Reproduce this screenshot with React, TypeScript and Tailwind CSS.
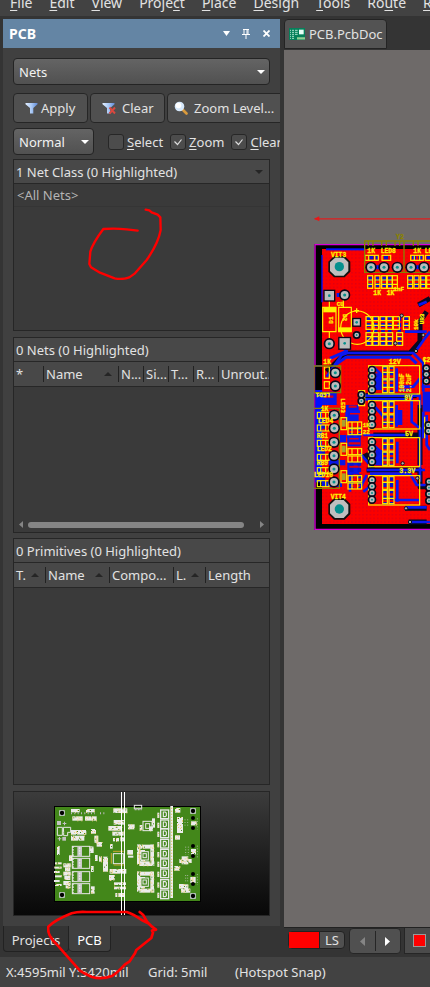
import React from "react";

type Box = [number, number, number, number];

const menus: [string, string, string][] = [
  ["", "F", "ile"],
  ["", "E", "dit"],
  ["", "V", "iew"],
  ["Proje", "c", "t"],
  ["", "P", "lace"],
  ["", "D", "esign"],
  ["", "T", "ools"],
  ["Ro", "u", "te"],
  ["", "R", "eports"],
];

function Caret({ className = "" }: { className?: string }) {
  return (
    <svg viewBox="0 0 8 4" className={`h-1 w-2 shrink-0 ${className}`} fill="currentColor" aria-hidden="true">
      <path d="M0 0H8L4 4Z" />
    </svg>
  );
}

function SortMark() {
  return (
    <svg viewBox="0 0 8 4" className="mr-1.5 h-1 w-2 shrink-0" fill="#252525" aria-hidden="true">
      <path d="M0 4H8L4 0Z" />
    </svg>
  );
}

function FunnelIcon({ clear = false }: { clear?: boolean }) {
  return (
    <svg viewBox="0 0 14 13" className="h-[13px] w-3.5 shrink-0" aria-hidden="true">
      <defs>
        <linearGradient id={clear ? "funnelB" : "funnelA"} x1="0" x2="1" y1="0" y2="0">
          <stop offset="0" stopColor="#e3efff" />
          <stop offset="0.5" stopColor="#a9c8f5" />
          <stop offset="1" stopColor="#5f8ad6" />
        </linearGradient>
      </defs>
      <path d="M0.500 1H12.500V2.200L8.300 6V11.500H5V6L0.500 2.200Z" fill={clear ? "url(#funnelB)" : "url(#funnelA)"} />
      {clear && <path d="M7.500 5.500L13 11.500M13 5.500L7.500 11.500" stroke="#d9483f" strokeWidth="1.900" />}
    </svg>
  );
}

function LensIcon() {
  return (
    <svg viewBox="0 0 14 14" className="h-3.5 w-3.5 shrink-0" aria-hidden="true">
      <path d="M8.500 8.500L12.500 12.500" stroke="#d99a3c" strokeWidth="2.600" strokeLinecap="round" />
      <circle cx="5.500" cy="5.500" r="4.800" fill="#d5e8fb" />
      <circle cx="4.500" cy="4.500" r="2.800" fill="#fff" />
    </svg>
  );
}

function DocIcon() {
  return (
    <svg viewBox="0 0 48 36" className="h-3 w-4 shrink-0" aria-hidden="true">
      <rect width="48" height="36" fill="#05805a" />
      <path d="M3 7H6M3 13H6M3 19H6M3 25H6M3 31H6M9 7H15M9 13H15M9 19H15M9 25H15M9 31H15M18 7H26M18 13H26M18 19H26" stroke="#c9f3e2" strokeWidth="2.500" />
      <rect x="30" y="5" width="14" height="14" fill="#e6fff6" />
      <path d="M25 31H48" stroke="#d8f5b0" strokeWidth="7" strokeDasharray="4 2" />
    </svg>
  );
}

function PanelHeader() {
  const btn = "flex h-5 w-5 items-center justify-center";
  return (
    <header className="flex h-[29px] shrink-0 items-center bg-[#6485a4] pl-1.5 pr-1 text-white">
      <h1 className="flex-1 text-[14px] font-bold leading-5">PCB</h1>
      <button className={btn} aria-label="Panel menu">
        <svg viewBox="0 0 7 5" className="h-[5px] w-[7px]" fill="white"><path d="M0 0H7L3.500 5Z" /></svg>
      </button>
      <button className={btn} aria-label="Pin panel">
        <svg viewBox="0 0 8 10" className="h-2.5 w-2" fill="none" stroke="white">
          <path d="M1 .5H7M2 0V5M5 0V5M6 0V5M0 5.500H8M4 6V10" />
        </svg>
      </button>
      <button className={btn} aria-label="Close panel">
        <svg viewBox="0 0 7 7" className="h-[7px] w-[7px]" stroke="white" strokeWidth="1.800"><path d="M.5 .5L6.500 6.500M6.500 .5L.5 6.500" /></svg>
      </button>
    </header>
  );
}

function Dropdown({ label, value, className }: { label: string; value: string; className: string }) {
  return (
    <div className={`relative flex h-[27px] items-center rounded-sm border border-[#242424] bg-linear-to-b from-[#646464] to-[#515151] ${className}`}>
      <select aria-label={label} className="h-full w-full appearance-none bg-transparent pl-[5px] text-[13px] text-[#f2f2f2] outline-none">
        <option>{value}</option>
      </select>
      <Caret className="pointer-events-none absolute right-1 text-white" />
    </div>
  );
}

function Check({ first, rest, on = false }: { first: string; rest: string; on?: boolean }) {
  return (
    <label className="flex shrink-0 items-center gap-[3px]">
      <span className="relative flex h-4 w-4 items-center justify-center">
        <input type="checkbox" defaultChecked={on} className="peer h-4 w-4 appearance-none rounded-[3px] border border-[#272727] bg-[#4c4c4c]" />
        <svg viewBox="0 0 8 8" className="pointer-events-none invisible absolute h-2 w-2 peer-checked:visible" fill="none" stroke="#ddd" strokeWidth="1.200">
          <path d="M0.500 3.500L3.500 6.500L7.500 1.500" />
        </svg>
      </span>
      <span><span className="underline underline-offset-2">{first}</span>{rest}</span>
    </label>
  );
}

function Tool({ icon, children, className }: { icon: React.ReactNode; children: React.ReactNode; className: string }) {
  return (
    <button className={`flex h-[30px] shrink-0 items-center rounded-sm border border-[#262626] bg-[#505050] ${className}`}>
      {icon}
      {children}
    </button>
  );
}

function Columns({ cols }: { cols: { text: string; width: string; sort?: boolean }[] }) {
  return (
    <table className="w-full table-fixed border-collapse">
      <thead>
        <tr className="h-6 border-b border-[#272727] bg-[#484848]">
          {cols.map((c, i) => (
            <th key={i} scope="col" className={`overflow-hidden p-0 text-left font-normal ${c.width}`}>
              <span className={`flex h-4 items-center justify-between whitespace-nowrap ${i ? "border-l border-[#222] pl-0.5" : "pl-0.5"}`}>
                {c.text}
                {c.sort && <SortMark />}
              </span>
            </th>
          ))}
        </tr>
      </thead>
    </table>
  );
}

const listBox = "border border-[#262626] bg-[#3a3a3a]";
const listTitle = "flex h-6 items-center justify-between border-b border-[#272727] bg-[#484848] px-0.5";

/* ---------- board overview ---------- */

const yBlocks: number[] = [45, 75, 102, 133, 163, 192, 222, 254, 285];
const overviewWhite: Box[] = [
  [78, 42, 26, 10], [123, 42, 26, 10], [82, 64, 31, 13], [120, 64, 35, 13], [205, 40, 42, 14], [206, 75, 32, 14],
  [78, 105, 46, 14], [78, 122, 40, 15], [138, 102, 15, 14], [148, 122, 12, 22], [155, 141, 16, 14], [190, 93, 40, 14],
  [202, 110, 34, 12], [204, 129, 18, 10], [226, 127, 12, 12], [249, 88, 20, 15], [247, 165, 17, 14], [249, 182, 16, 6],
  [36, 153, 8, 27], [134, 154, 12, 20], [72, 181, 10, 17], [138, 213, 8, 18], [138, 274, 11, 22],
  [150, 180, 8, 18], [162, 184, 8, 16], [174, 185, 15, 45], [194, 222, 50, 14], [192, 240, 17, 16], [207, 262, 36, 8],
  [207, 275, 36, 8], [211, 294, 26, 12], [195, 147, 8, 14], [284, 90, 8, 16], [321, 70, 9, 28], [312, 94, 12, 14],
  [390, 39, 16, 14], [396, 66, 18, 48], [390, 121, 15, 13], [438, 79, 17, 12], [438, 162, 15, 16], [410, 184, 20, 24], [403, 192, 37, 12],
  [388, 213, 16, 14], [436, 246, 16, 18], [402, 267, 16, 14], [408, 281, 28, 12], [415, 268, 15, 24],
  [30, 202, 20, 6], [28, 215, 22, 6], [27, 228, 17, 6], [30, 241, 20, 6], [27, 255, 17, 6], [30, 267, 20, 6],
  [55, 205, 22, 12], [60, 217, 16, 12], [55, 230, 22, 12], [58, 243, 18, 12], [55, 258, 22, 12], [62, 270, 14, 10],
  [276, 149, 50, 12], [276, 149, 10, 58], [283, 199, 45, 14], [316, 149, 11, 60], [284, 165, 16, 34],
  [276, 230, 50, 12], [276, 230, 10, 60], [283, 281, 45, 12], [316, 230, 11, 60], [284, 246, 16, 34],
];

function grain(list: Box[]): { x: number; y: number; c: string }[] {
  const out: { x: number; y: number; c: string }[] = [];
  list.forEach(([x, y, w, h], n) => {
    for (let i = 0; i < w; i += 3)
      for (let j = 0; j < h; j += 3) {
        const k = (i * 7 + j * 11 + n * 5 + i * j) % 17;
        if (k === 2 || k === 9) out.push({ x: x + i, y: y + j, c: "#f0cf80" });
        if (k === 5) out.push({ x: x + i, y: y + j, c: "#48871c" });
      }
  });
  return out;
}
const overviewGrain = grain(overviewWhite);

function Overview() {
  return (
    <svg viewBox="-93 -9 765 369" className="block h-[123px] w-full" role="img" aria-label="Board overview">
      <rect x="28.500" y="34.500" width="438" height="285" fill="#43871a" stroke="#000" strokeWidth="3" />
      <g fill="#ececec">{overviewWhite.map(([x, y, w, h], i) => <rect key={i} x={x} y={y} width={w} height={h} />)}</g>
      <g>{overviewGrain.map((g, i) => <rect key={i} x={g.x} y={g.y} width="3" height="3" fill={g.c} />)}</g>
      <g fill="none" stroke="#e9e9e9" strokeWidth="3">
        <path d="M37 97H52V121H37ZM55 97H77V112H68V122H56V112Z" />
        {[154, 190, 230, 266].map((y) => (
          <g key={y}>
            <rect x="82" y={y} width="52" height="30" fill="#43871a" />
            <rect x="97" y={y} width="14" height="30" fill="#c9c9c9" stroke="none" />
            <path d={`M84 ${y}V${y + 30}M104 ${y + 3}V${y + 27}`} strokeWidth="4" strokeDasharray="5 3" />
          </g>
        ))}
        <rect x="294" y="79" width="27" height="28" />
        <rect x="302" y="86" width="12" height="14" />
        <rect x="288" y="170" width="22" height="25" fill="#43871a" />
        <rect x="294" y="176" width="10" height="12" />
        <rect x="288" y="249" width="22" height="25" fill="#43871a" />
        <rect x="294" y="255" width="10" height="12" />
        {yBlocks.map((y) => (
          <g key={y}>
            <rect x="347" y={y} width="24" height="26" strokeWidth="4" fill="#43871a" />
            <path d={`M355 ${y + 6}H361L364 ${y + 9}V${y + 17}L361 ${y + 20}H355Z`} strokeWidth="3.500" />
            <path d={`M340 ${y + 8}V${y + 24}`} strokeWidth="6" />
            <path d={`M340 ${y + 12}V${y + 22}`} strokeWidth="4" stroke="#e2c684" strokeDasharray="3 5" />
          </g>
        ))}
        <rect x="205" y="176" width="30" height="30" />
        <rect x="268" y="31" width="22" height="10" />
        <path d="M269 42H290" stroke="#bbb" strokeWidth="8" strokeDasharray="6 3" />
      </g>
      <path d="M204 169H236M199 174V206M206 210H236" stroke="#cba32d" strokeWidth="3" />
      <path d="M380 33V309" stroke="#f0f0f0" strokeWidth="8" />
      <path d="M380 38V306" stroke="#e2bd68" strokeWidth="3" strokeDasharray="4 5" />
      <path d="M78 55H150M165 55H182" stroke="#b9b9b9" strokeWidth="6" strokeDasharray="3 7" />
      <path d="M420 73V97M428 73V97M422 155V180M430 155V180M422 240V263M428 240V263M457 70V103M457 152V187M457 237V270" stroke="#a5b79a" strokeWidth="3" strokeDasharray="3 5" />
      <g fill="#c3c3c3"><rect x="36" y="78" width="12" height="12" /><rect x="52" y="126" width="11" height="11" /><path d="M57 80H60V84H64V87H60V91H57V87H53V84H57Z" /><path d="M42 126H45V130H49V133H45V137H42V133H38V130H42Z" /></g>
      {[[51, 54], [444, 48], [51, 300], [444, 303]].map(([x, y]) => (
        <g key={`${x}-${y}`}><rect x={x - 9} y={y - 9} width="18" height="18" rx="3" fill="#b8c4bb" /><circle cx={x} cy={y} r="6.500" fill="#000" /></g>
      ))}
      {[69, 99, 153, 183, 237, 267].map((y) => <circle key={y} cx="444" cy={y} r="6" fill="#000" />)}
      <path d="M229.500 -9V360M238.500 -9V360" stroke="#fff" strokeWidth="3" />
    </svg>
  );
}

/* ---------- board layout ---------- */

const resistorsTop: number[] = [173, 195, 215, 232, 247, 293, 312, 332, 350];
const caps: [number, number][] = [
  [168, 335], [188, 335], [210, 335], [230, 335], [250, 335], [280, 335],
  [168, 383], [188, 383], [210, 383], [230, 383], [260, 383],
];
const headers: { y: number; h: number }[] = [
  { y: 482, h: 85 }, { y: 587, h: 85 }, { y: 698, h: 87 }, { y: 812, h: 88 },
];
const silk: [number, number, string, number][] = [
  [63, 155, "VIT3", 19], [172, 144, "1K", 19], [212, 145, "LED8", 19], [310, 144, "1K", 19], [344, 145, "LED", 19],
  [190, 270, "1K", 19], [230, 270, "1K", 19], [250, 257, "1nF", 18], [80, 304, "CU", 18],
  [40, 476, "1K", 19], [236, 478, "12V", 20], [338, 470, "C2", 19], [32, 618, "1K", 19], [283, 585, "9V", 19],
  [24, 654, "LED4", 19], [158, 666, "1K", 18], [158, 686, "22", 18], [20, 700, "RB1", 19], [20, 738, "LED2", 19], [285, 692, "5V", 20],
  [20, 781, "RB9", 19], [12, 817, "LED10", 19], [268, 805, "3.3V", 20], [62, 881, "VIT4", 19],
];

function Pad({ x, y, r = 12 }: { x: number; y: number; r?: number }) {
  return (
    <g>
      <circle cx={x} cy={y} r={r + 5} fill="#08081a" />
      <circle cx={x} cy={y} r={r} fill="#bcbcbc" />
      <circle cx={x} cy={y} r={r * 0.38} fill="#078f8c" />
    </g>
  );
}

function Mount({ y }: { y: number }) {
  return (
    <g>
      <path d={`M72 ${y - 32}H104L121 ${y - 15}V${y + 15}L104 ${y + 32}H72L55 ${y + 15}V${y - 15}Z`} fill="#111" />
      <path d={`M75 ${y - 27}H101L115 ${y - 13}V${y + 13}L101 ${y + 27}H75L60 ${y + 13}V${y - 13}Z`} fill="#bfbfbf" />
      <circle cx="88" cy={y} r="14" fill="#05908e" />
    </g>
  );
}

function Board() {
  return (
    <svg viewBox="12 30 348 945" className="block h-[315px] w-[116px]" role="img" aria-label="PCB layout">
      <defs>
        <pattern id="vias" width="11" height="11" patternUnits="userSpaceOnUse">
          <rect width="11" height="11" fill="#fb0000" />
          <rect x="4" y="4" width="2.500" height="2.500" fill="#a20038" />
        </pattern>
      </defs>
      <path d="M14 41.500H360" stroke="#e01f1f" strokeWidth="4" />
      <path d="M12 41.500L28 34V49Z" fill="#e81818" />
      <rect x="13" y="117" width="360" height="858" fill="#000" />
      <rect x="36" y="132" width="336" height="825" fill="url(#vias)" />
      <path d="M15 975V119H360M15 973H360" fill="none" stroke="#d800d8" strokeWidth="4" />

      <rect x="48" y="130" width="118" height="6" fill="#0010ff" />
      <path d="M36 150V292" stroke="#0010ff" strokeWidth="4" />
      <rect x="16" y="480" width="20" height="352" fill="#0010ff" />
      <rect x="16" y="485" width="20" height="70" fill="#000" />
      <g fill="#0a16e6">
        <rect x="36" y="560" width="44" height="40" />
        <rect x="58" y="618" width="32" height="26" />
        <rect x="86" y="690" width="22" height="22" />
        <rect x="56" y="765" width="50" height="16" />
        <rect x="36" y="830" width="60" height="16" />
        <rect x="108" y="600" width="38" height="48" />
        <rect x="112" y="690" width="40" height="34" />
        <rect x="112" y="772" width="36" height="36" />
        <rect x="190" y="572" width="30" height="16" />
        <rect x="195" y="505" width="20" height="50" />
        <rect x="255" y="615" width="22" height="45" />
        <rect x="196" y="735" width="20" height="46" />
        <rect x="338" y="560" width="22" height="60" />
      </g>
      <path d="M116 605H140M120 625H150M118 700H146M116 715H150M118 785H146M42 575H70" stroke="#e00010" strokeWidth="7" />

      <g fill="none" stroke="#090920" strokeWidth="15" strokeLinejoin="round">
        <path d="M50 500L108 444H300L330 410V350L350 320" />
        <path d="M165 572H320M170 795H330V845H360M165 745L190 795" />
        <path d="M285 910H350M296 951H350M330 600V780" />
        <path d="M325 300L360 280M190 690H330" />
      </g>
      <g fill="none" stroke="#0b18f0" strokeWidth="8" strokeLinejoin="round">
        <path d="M50 515L95 450L112 444H310L340 475V560" />
        <path d="M75 480L108 457H300L320 475M86 415L110 438L60 460" strokeWidth="9" />
        <path d="M165 572H330V610M160 583H290M170 795H345M180 806H300L320 840H360M150 745L185 785" />
        <path d="M318 437L345 400L360 380M285 380H350M305 570V650L330 670V830" />
        <path d="M285 907H350M300 951H360M335 545H360M120 620H150M110 695H150M120 800V860M160 860L185 840" />
        <path d="M326 300L350 290M110 650V620M260 490V560M260 600V665M262 710V775M262 825V890" />
        <path d="M80 270H107M185 187H220M303 187H342" strokeWidth="12" />
        <path d="M340 620V700M350 630V720L360 735M250 885H330M190 485L215 510L190 530M190 600L225 640M190 720L218 745L190 770" />
        <path d="M270 545H310L330 520M270 555H300M160 690H290M170 810L150 850" />
      </g>
      <g fill="none" stroke="#0814cc" strokeWidth="11" strokeDasharray="12 7">
        <path d="M180 215V250M202 215V250M222 215V250M240 215V250M300 215V250M320 215V250M340 215V250" />
        <path d="M176 335V420M197 335V420M219 335V420M239 335V420M268 335V420M289 335V372" />
        <path d="M225 480V565M245 480V565M225 590V670M245 590V670M225 700V780M245 700V780M225 815V900M245 815V900" />
        <path d="M125 665V700M148 665V700M125 770V850M148 770V850M40 640V680M40 720V755M40 800V840" />
        <path d="M178 158H205M222 158H242M306 158H340M350 158H372" />
      </g>

      <g fill="none" stroke="#fff200" strokeWidth="3.500">
        {resistorsTop.map((x) => <g key={x}><rect x={x} y="212" width="15" height="38" /><path d={`M${x} 225H${x + 15}M${x} 238H${x + 15}`} /></g>)}
        <rect x="165" y="151" width="40" height="15" /><path d="M176 151V166M194 151V166" />
        <rect x="216" y="151" width="26" height="15" />
        <rect x="302" y="151" width="38" height="15" /><path d="M313 151V166M329 151V166" />
        <rect x="346" y="151" width="26" height="15" />
        {caps.map(([x, y]) => <g key={`${x}-${y}`}><rect x={x} y={y} width="18" height="38" /><path d={`M${x} ${y + 12}H${x + 18}M${x} ${y + 26}H${x + 18}`} /></g>)}
        <path d="M38 307H78V380H38ZM58 285V307M58 380V400M86 307H124V380H86ZM100 285V307" />
        <circle cx="142" cy="368" r="50" />
        {headers.map(({ y, h }) => (
          <g key={y}>
            <rect x="176" y={y} width="153" height={h} />
            <rect x="218" y={y + 3} width="14" height={h / 2 - 6} /><rect x="237" y={y + 3} width="15" height={h / 2 - 6} />
            <rect x="218" y={y + h / 2} width="14" height={h / 2 - 4} /><rect x="237" y={y + h / 2} width="15" height={h / 2 - 4} />
            <path d={`M218 ${y + 20}H252M218 ${y + h - 20}H252`} />
          </g>
        ))}
        <rect x="146" y="557" width="18" height="45" />
        <rect x="43" y="486" width="15" height="34" /><rect x="43" y="530" width="15" height="20" />
        {[622, 660, 706, 748, 788, 827].map((y) => <g key={y}><rect x="22" y={y} width="35" height="18" /><path d={`M32 ${y}V${y + 18}M47 ${y}V${y + 18}`} /></g>)}
        {[651, 671, 731, 753, 812, 834].map((y) => <g key={y}><rect x="114" y={y} width="41" height="18" /><path d={`M126 ${y}V${y + 18}M143 ${y}V${y + 18}`} /></g>)}
        {[638, 715, 797].map((y) => <rect key={y} x="93" y={y} width="17" height="36" />)}
        <path d="M344 460V540M344 635V700M352 820V890" />
      </g>
      <g fill="#fff200">
        <rect x="40" y="309" width="38" height="13" /><rect x="84" y="367" width="40" height="13" />
        <path d="M138 310H142V315H147V319H142V324H138V319H133V315H138Z" />
        {[645, 722, 805].map((y) => <rect key={y} x="96" y={y} width="11" height="20" fill="#aaa12b" />)}
      </g>
      <path d="M164 108H282V202H164ZM282 108H372V202H282ZM12 483H92V563H12ZM12 610H88V850H12M175 108V122M189 108V122M215 108V122M229 108V122M255 108V122M269 108V122M310 108V122M324 108V122" fill="none" stroke="#8a8200" strokeWidth="4" />

      <Mount y={185} />
      <Mount y={912} />
      {[[183, 187], [222, 187], [262, 187], [303, 187], [342, 187], [104, 270], [58, 416], [76, 503], [76, 543], [73, 631], [73, 670], [72, 712], [72, 752], [72, 792], [72, 831]].map(([x, y]) => <Pad key={`${x}-${y}`} x={x} y={y} />)}
      {headers.flatMap(({ y }) => [13, 32, 52, 72].map((d) => <Pad key={`${y}-${d}`} x={186} y={y + d} r={8} />))}
      {[[140, 390], [154, 569], [154, 588], [349, 490], [349, 508], [349, 528], [355, 660], [355, 678], [357, 830], [357, 848], [357, 867], [357, 887]].map(([x, y]) => <Pad key={`${x}-${y}`} x={x} y={y} r={7} />)}
      {[[58, 272, 28], [104, 415, 31], [140, 352, 19]].map(([x, y, s]) => (
        <g key={y}><rect x={x - s / 2 - 4} y={y - s / 2 - 4} width={s + 8} height={s + 8} fill="#08081a" /><rect x={x - s / 2} y={y - s / 2} width={s} height={s} fill="#bdbdbd" /><circle cx={x} cy={y} r="4" fill="#078f8c" /></g>
      ))}
      <g fill="#a8a8a8" stroke="#101020" strokeWidth="3">
        {[[275, 332], [318, 438], [340, 390], [256, 415], [288, 910], [300, 951], [278, 775], [322, 820]].map(([x, y]) => <circle key={`${x}-${y}`} cx={x} cy={y} r="5" />)}
      </g>

      <g fill="#fff200" stroke="#fff200" strokeWidth="0.800" fontFamily="Liberation Mono, monospace" fontWeight="bold">
        {silk.map(([x, y, t, s], i) => <text key={i} x={x} y={y} fontSize={s}>{t}</text>)}
        <text x="258" y="101" fontSize="20" fill="#8a8200" stroke="#8a8200">Y2</text>
        <text transform="translate(68 356) rotate(-90)" fontSize="18">D1</text>
        <text transform="translate(98 327) rotate(90)" fontSize="18">D2</text>
        <text transform="translate(283 562) rotate(-90)" fontSize="19">100nF</text>
        <text transform="translate(302 562) rotate(-90)" fontSize="19">2.2uF</text>
        <text transform="translate(325 375) rotate(-90)" fontSize="18">10k</text>
        <text transform="translate(343 358) rotate(-90)" fontSize="18">UR3</text>
        <text transform="translate(94 580) rotate(90)" fontSize="18">LED3</text>
        <text transform="translate(60 564) rotate(180)" fontSize="18">LED1</text>
      </g>
    </svg>
  );
}

export default function App() {
  return (
    <div className="relative flex h-screen min-h-[720px] flex-col overflow-hidden bg-[#343434] font-['Noto_Sans','Open_Sans',sans-serif] text-[13px] leading-5 text-[#e2e2e2]">
      <nav className="flex h-4 shrink-0 items-end gap-[17px] overflow-hidden bg-[#424242] pb-[3px] pl-2.5 text-[14px]">
        {menus.map(([a, b, c], i) => (
          <a key={i} href="#" className="shrink-0">{a}<span className="underline underline-offset-2">{b}</span>{c}</a>
        ))}
      </nav>

      <div className="flex min-h-0 flex-1 pt-[3px]">
        <aside className="ml-[3px] flex w-[277px] shrink-0 flex-col">
          <section className="flex min-h-0 flex-1 flex-col overflow-hidden bg-[#404040]">
            <PanelHeader />
            <div className="flex min-h-0 flex-1 flex-col px-2.5 pb-2.5 pt-2.5">
              <Dropdown label="Mode" value="Nets" className="shrink-0" />
              <div className="mt-2 flex gap-0.5 whitespace-nowrap">
                <Tool icon={<FunnelIcon />} className="w-[75px] gap-0.5 pl-[11px]">Apply</Tool>
                <Tool icon={<FunnelIcon clear />} className="w-[75px] gap-1.5 pl-[11px]">Clear</Tool>
                <Tool icon={<LensIcon />} className="w-[120px] gap-1.5 pl-1.5">Zoom Level...</Tool>
              </div>
              <div className="mt-[5px] flex items-center gap-[7px]">
                <Dropdown label="Highlight" value="Normal" className="mr-[7px] w-[81px] shrink-0" />
                <Check first="S" rest="elect" />
                <Check first="Z" rest="oom" on />
                <Check first="C" rest="lear" on />
              </div>

              <section className={`${listBox} relative mt-1 h-[172px] shrink-0`}>
                <h2 className={listTitle}>1 Net Class (0 Highlighted)<Caret className="mr-1 text-[#252525]" /></h2>
                <p className="h-[23px] border-b border-[#353535] pl-[3px] leading-[22px] text-[#b4b4b4]">&lt;All Nets&gt;</p>
                <svg viewBox="261 171 228 219" className="pointer-events-none absolute left-[73px] top-[47px] h-[73px] w-[76px]" fill="none" stroke="#f00" strokeWidth="7" strokeLinecap="round" strokeLinejoin="round">
                  <path d="M437 179L448 181L455 187L473 194L481 202L482 240Q475 280 440 330L405 370L388 382Q365 390 344 385L300 368L273 352L268 342L271 305Q278 280 310 237Q345 234 380 238L413 242" />
                </svg>
              </section>

              <section className={`${listBox} mt-[6px] flex h-[196px] shrink-0 flex-col`}>
                <h2 className={listTitle}>0 Nets (0 Highlighted)</h2>
                <Columns
                  cols={[
                    { text: "*", width: "w-[29px]" },
                    { text: "Name", width: "w-[75px]", sort: true },
                    { text: "N...", width: "w-[25px]" },
                    { text: "Si...", width: "w-[25px]" },
                    { text: "T...", width: "w-[25px]" },
                    { text: "R...", width: "w-[25px]" },
                    { text: "Unrout...", width: "" },
                  ]}
                />
                <div className="mt-auto flex h-[15px] items-center pl-[5px] pr-[5px] text-[#858585]">
                  <svg viewBox="0 0 4 7" className="h-[7px] w-1" fill="currentColor"><path d="M4 0V7L0 3.500Z" /></svg>
                  <div className="ml-[5px] mr-4 h-1.5 flex-1 rounded-full bg-[#858585]" />
                  <svg viewBox="0 0 4 7" className="h-[7px] w-1" fill="currentColor"><path d="M0 0V7L4 3.500Z" /></svg>
                </div>
              </section>

              <section className={`${listBox} mt-[5px] min-h-12 flex-1`}>
                <h2 className={listTitle}>0 Primitives (0 Highlighted)</h2>
                <Columns
                  cols={[
                    { text: "T.", width: "w-[31px]", sort: true },
                    { text: "Name", width: "w-[64px]", sort: true },
                    { text: "Compo...", width: "w-[64px]" },
                    { text: "L.", width: "w-[32px]", sort: true },
                    { text: "Length", width: "" },
                  ]}
                />
              </section>

              <div className="mt-[6px] shrink-0 border border-[#262626] bg-linear-to-b from-[#3c3c3c] to-[#080808]">
                <Overview />
              </div>
            </div>
          </section>
          <div className="flex h-[31px] shrink-0 items-start">
            <button className="h-[26px] w-[66px] rounded-b border border-t-0 border-[#222] bg-[#343434] pt-0.5">Projects</button>
            <button className="h-[26px] w-[42px] rounded-b border border-l-0 border-t-0 border-[#222] bg-[#404040] pt-0.5 text-white">PCB</button>
          </div>
        </aside>

        <main className="ml-1 flex min-w-0 flex-1 flex-col">
          <div className="flex h-[31px] shrink-0">
            <button className="flex h-[30px] w-[103px] shrink-0 items-center gap-1 rounded-t border border-[#242424] bg-[#535353] pl-1 whitespace-nowrap">
              <DocIcon />PCB.PcbDoc
            </button>
          </div>
          <div className="min-h-0 flex-1 overflow-hidden bg-[#6e6a69] pl-[30px] pt-[165px]">
            <Board />
          </div>
          <div className="flex h-[30px] shrink-0 items-start overflow-hidden border-t border-[#222] pl-1">
            <button className="mt-[3px] flex h-[18px] w-[57px] shrink-0 items-center rounded-sm border border-[#222] bg-[#505050]">
              <span className="h-full w-[31px] border-r border-[#222] bg-[#f00]" />
              <span className="flex-1 text-center leading-4">LS</span>
            </button>
            <div className="ml-1 flex h-[26px] w-[52px] shrink-0 items-center rounded-sm border border-[#262626] bg-[#505050]">
              <button aria-label="Previous layer" className="flex h-5 flex-1 items-center justify-center border-r border-[#262626] text-[#858585]">
                <svg viewBox="0 0 5 9" className="h-[9px] w-[5px]" fill="currentColor"><path d="M5 0V9L0 4.500Z" /></svg>
              </button>
              <button aria-label="Next layer" className="flex h-5 flex-1 items-center justify-center text-white">
                <svg viewBox="0 0 5 9" className="h-[9px] w-[5px]" fill="currentColor"><path d="M0 0V9L5 4.500Z" /></svg>
              </button>
            </div>
            <button aria-label="Layer" className="ml-[3px] flex h-[26px] w-[60px] shrink-0 items-center border-b border-l border-[#262626] bg-[#4b4b4b] pl-2">
              <span className="h-[13px] w-[13px] border border-[#999] bg-[#f00]" />
            </button>
          </div>
        </main>
      </div>

      <footer className="flex h-[30px] shrink-0 items-center whitespace-nowrap bg-[#424242] pl-1.5">
        <span className="w-[142px]">X:4595mil Y:5420mil</span>
        <span className="w-[87px]">Grid: 5mil</span>
        <span>(Hotspot Snap)</span>
      </footer>

      <svg viewBox="141 390 336 210" className="pointer-events-none absolute bottom-[7px] left-[47px] h-[70px] w-28" fill="none" stroke="#f00" strokeWidth="8" strokeLinecap="round" strokeLinejoin="round">
        <path d="M419 396L429 404L441 425L456 440L468 449L456 452L459 458L454 474L409 510L405 520L388 545L375 553Q350 580 336 588Q305 599 276 591L251 579L240 572L229 560L192 518L172 495Q140 465 145 440Q165 420 215 400Q235 394 260 396H380Q400 402 425 420L445 430L456 440" />
      </svg>
    </div>
  );
}
